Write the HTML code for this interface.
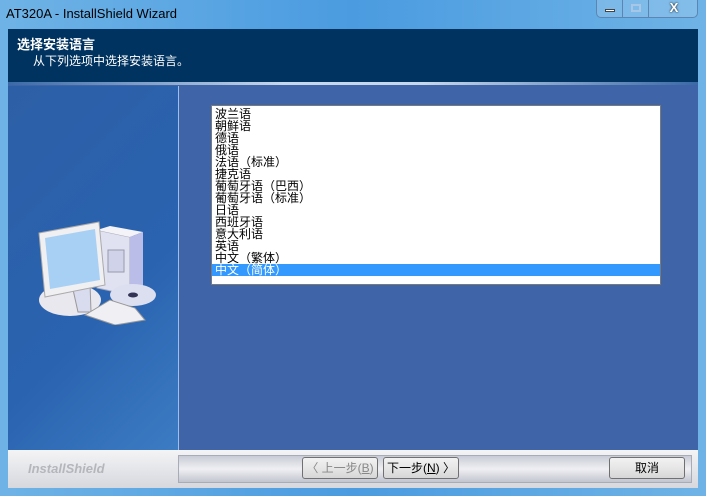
<!DOCTYPE html>
<html><head><meta charset="utf-8"><style>
*{margin:0;padding:0;box-sizing:border-box}
body{width:706px;height:496px;overflow:hidden;background:linear-gradient(90deg,#6fb3e6,#4a9be0 50%,#6fb3e6);font-family:"Liberation Sans","Noto Sans CJK SC",sans-serif;position:relative}
.t{position:absolute}
#title{left:6px;top:6px;font-size:13px;color:#000}
#ctl{left:596px;top:0;width:102px;height:18px;border:1px solid #5d85b4;border-top:none;border-radius:0 0 5px 5px;background:rgba(255,255,255,0.15)}
#head{left:8px;top:29px;width:690px;height:55px;background:#00335f;color:#fff}
#body{left:8px;top:84px;width:690px;height:366px;background:#3f64a8}
#line{left:8px;top:82px;width:690px;height:3px;background:linear-gradient(90deg,#3a6aa6,#c8d8ec 40%,#c8d8ec 60%,#3a6aa6)}
#left{left:8px;top:86px;width:170px;height:364px;background:linear-gradient(135deg,#2d5fa6,#2a63b0 60%,#3c7cc3)}
#vl{left:178px;top:86px;width:1px;height:364px;background:#9fc0e6}
#list{left:211px;top:105px;width:450px;height:180px;background:#fff;border:1px solid #7a7a7a;font-size:12px;line-height:12px;color:#000;padding-top:2px}
#list div{padding-left:3px;height:12px;white-space:nowrap}
#list .sel{background:#3399ff;color:#fff}
#bot{left:8px;top:450px;width:690px;height:38px;background:linear-gradient(#f4f4f6,#d6d8de)}
#strip{left:178px;top:455px;width:514px;height:28px;background:linear-gradient(#c9ccd6,#f0f0f3 50%,#c2c5cf);border:1px solid #a8acb6}
.btn{position:absolute;top:457px;height:22px;width:76px;border:1px solid #707070;border-radius:3px;background:linear-gradient(#f2f2f2,#e6e6e6 50%,#d6d6d6);font-size:12px;text-align:center;line-height:20px;color:#000}
</style></head><body>
<div class="t" id="title">AT320A - InstallShield Wizard</div>
<div class="t" id="ctl">
<div class="t" style="left:0;top:0;width:26px;height:17px;border-right:1px solid #5d85b4"><div class="t" style="left:8px;top:9px;width:10px;height:3px;background:#fff;border:1px solid #444"></div></div>
<div class="t" style="left:26px;top:0;width:26px;height:17px;border-right:1px solid #5d85b4"><div class="t" style="left:8px;top:4px;width:10px;height:8px;border:2px solid #a8c6e6"></div></div>
<div class="t" style="left:52px;top:0;width:50px;height:17px;color:#fff;font-weight:bold;font-size:13px;text-align:center;line-height:16px;text-shadow:0 0 2px #000">X</div>
</div>
<div class="t" id="head">
<div class="t" style="left:9px;top:5px;font-size:13px;font-weight:bold">选择安装语言</div>
<div class="t" style="left:25px;top:23px;font-size:12px">从下列选项中选择安装语言。</div>
</div>
<div class="t" id="body"></div>
<div class="t" id="line"></div>
<div class="t" id="left"></div>
<div class="t" id="vl"></div>
<svg class="t" style="left:35px;top:200px" width="125" height="125" viewBox="0 0 125 125">
<ellipse cx="35" cy="100" rx="31" ry="16" fill="#e8e8ee"/>
<polygon points="62,30 95,37 95,95 62,88" fill="#e0e2f2" stroke="#aab" />
<polygon points="62,30 75,26 108,32 95,37" fill="#f4f4f8"/>
<polygon points="95,37 108,32 108,90 95,95" fill="#b9bde8"/>
<rect x="73" y="50" width="16" height="22" fill="#d0d2ea" stroke="#99a"/>
<polygon points="37,85 55,83 56,112 43,112" fill="#d9dbee" stroke="#999"/>
<polygon points="4,33 64,22 70,85 10,97" fill="#f0f0f2" stroke="#aaa"/>
<polygon points="10,38 60,29 65,80 15,89" fill="#a8d0f4"/>
<ellipse cx="98" cy="95" rx="23" ry="11" fill="#dcdff0"/>
<ellipse cx="98" cy="95" rx="5" ry="2.5" fill="#335"/>
<polygon points="50,115 75,100 100,108 110,120 80,125" fill="#f0f0f4" stroke="#999"/>
</svg>
<div class="t" id="list">
<div>波兰语</div><div>朝鲜语</div><div>德语</div><div>俄语</div><div>法语（标准）</div><div>捷克语</div><div>葡萄牙语（巴西）</div><div>葡萄牙语（标准）</div><div>日语</div><div>西班牙语</div><div>意大利语</div><div>英语</div><div>中文（繁体）</div><div class="sel">中文（简体）</div>
</div>
<div class="t" id="bot"></div>
<div class="t" style="left:28px;top:461px;font-size:13px;font-weight:bold;color:#b4b6bc;font-style:italic">InstallShield</div>
<div class="t" id="strip"></div>
<div class="btn" style="left:302px;color:#888">〈 上一步(<u>B</u>)</div>
<div class="btn" style="left:383px">下一步(<u>N</u>) 〉</div>
<div class="btn" style="left:609px">取消</div>
</body></html>
